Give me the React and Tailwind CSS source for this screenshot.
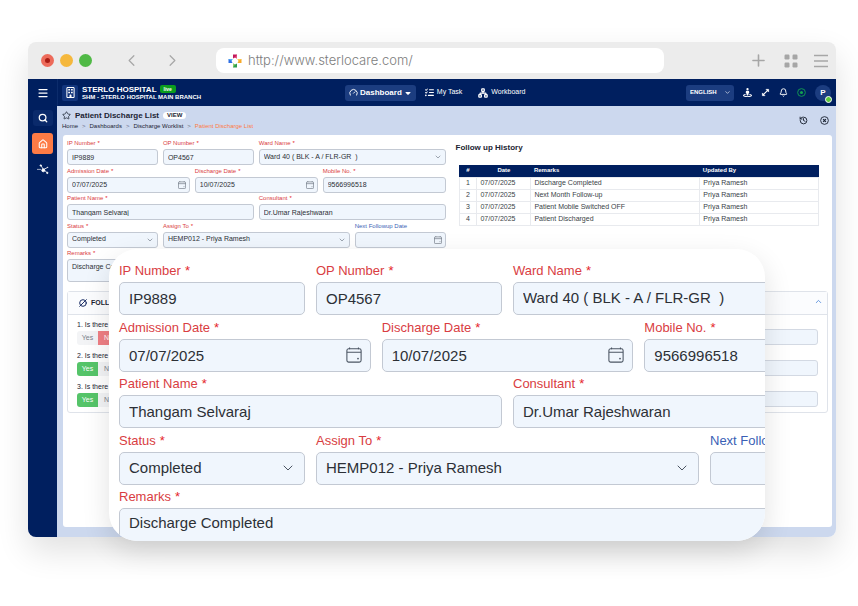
import { useId } from 'react';
import { Bell, ChevronDown, ChevronLeft, ChevronRight, ChevronUp, CircleSlash2, Gauge, History, House, Menu, Network, Plus, Search, Star } from 'lucide-react';
import { FaCaretDown, FaListCheck, FaRegBuilding, FaStreetView } from 'react-icons/fa6';

const FIELDS = [
  { label: 'IP Number', value: 'IP9889', span: 'col-span-3' },
  { label: 'OP Number', value: 'OP4567', span: 'col-span-3' },
  { label: 'Ward Name', value: 'Ward 40 ( BLK - A / FLR-GR\u00a0 )', span: 'col-span-6', type: 'select' },
  { label: 'Admission Date', value: '07/07/2025', span: 'col-span-4', type: 'date' },
  { label: 'Discharge Date', value: '10/07/2025', span: 'col-span-4', type: 'date' },
  { label: 'Mobile No.', value: '9566996518', span: 'col-span-4' },
  { label: 'Patient Name', value: 'Thangam Selvaraj', span: 'col-span-6' },
  { label: 'Consultant', value: 'Dr.Umar Rajeshwaran', span: 'col-span-6' },
  { label: 'Status', value: 'Completed', span: 'col-span-3', type: 'select' },
  { label: 'Assign To', value: 'HEMP012 - Priya Ramesh', span: 'col-span-6', type: 'select' },
  { label: 'Next Followup Date', value: '', span: 'col-span-3', type: 'date', optional: true },
];

const HISTORY = [
  ['07/07/2025', 'Discharge Completed', 'Priya Ramesh'],
  ['07/07/2025', 'Next Month Follow-up', 'Priya Ramesh'],
  ['07/07/2025', 'Patient Mobile Switched OFF', 'Priya Ramesh'],
  ['07/07/2025', 'Patient Discharged', 'Priya Ramesh'],
];

const QUESTIONS = [
  { text: '1. Is there', answer: 'No' },
  { text: '2. Is there', answer: 'Yes' },
  { text: '3. Is there', answer: 'Yes' },
];

const SIZES = {
  sm: {
    grid: 'h-[110px] gap-x-[5px]',
    label: 'h-[11px] text-[6px] leading-[11px]',
    star: 'ml-[2px]',
    control: 'h-4 rounded-[3px] px-1 text-[7px]',
    area: 'h-[23px] rounded-[3px] px-1 py-[3px] text-[7px] leading-[8px]',
    icon: 'right-1 size-2',
    calendar: 'right-1 size-2',
  },
  lg: {
    grid: 'h-[226px] gap-x-[11px]',
    label: 'h-[19px] text-[13px] leading-4',
    star: 'ml-1',
    control: 'h-[33px] rounded-[5px] px-[9px] text-[15px]',
    area: 'h-[60px] rounded-[5px] px-[9px] py-[5px] text-[15px] leading-[18px]',
    icon: 'right-[9px] size-4',
    calendar: 'right-[9px] size-4',
  },
};

function CalendarIcon({ className }) {
  return (
    <svg viewBox="0 0 18 18" fill="none" stroke="currentColor" strokeWidth="1.2" className={className}>
      <rect x="1" y="2" width="16" height="15" rx="2" />
      <path d="M1 6h16M4 0.500v2M14 0.500v2" />
      <circle cx="13.500" cy="13" r="1" fill="currentColor" stroke="none" />
    </svg>
  );
}

function DotIcon({ className }) {
  return (
    <svg viewBox="0 0 10 10" fill="none" stroke="currentColor" className={className}>
      <circle cx="5" cy="5" r="4.300" />
      <circle cx="5" cy="5" r="1.700" fill="currentColor" stroke="none" />
    </svg>
  );
}

function CloseIcon({ className }) {
  return (
    <svg viewBox="0 0 10 10" fill="none" stroke="currentColor" className={className}>
      <circle cx="5" cy="5" r="4.300" />
      <path d="M3.500 3.500l3 3M6.500 3.500l-3 3" strokeWidth="1.400" />
    </svg>
  );
}

function Label({ id, size, optional, children }) {
  return (
    <label htmlFor={id} className={`block whitespace-nowrap ${SIZES[size].label} ${optional ? 'text-[#3a5fb5]' : 'text-[#d93d42]'}`}>
      {children}
      {!optional && <span className={`text-[#e5252a] ${SIZES[size].star}`}>*</span>}
    </label>
  );
}

function Field({ label, value, span, type, optional, size }) {
  const id = useId();
  const s = SIZES[size];
  const control = `block w-full appearance-none border border-[#c3c9d3] bg-[#f0f6fd] text-[#2c3036] outline-none ${s.control}`;
  return (
    <div className={`min-w-0 ${span}`}>
      <Label id={id} size={size} optional={optional}>{label}</Label>
      <div className="relative text-[#4b5563]">
        {type === 'select' ? (
          <select id={id} className={control}>
            <option>{value}</option>
          </select>
        ) : (
          <input id={id} type="text" defaultValue={value} className={control} />
        )}
        {type === 'select' && <ChevronDown strokeWidth={1.5} className={`pointer-events-none absolute inset-y-0 my-auto ${s.icon}`} />}
        {type === 'date' && <CalendarIcon className={`pointer-events-none absolute inset-y-0 my-auto ${s.calendar}`} />}
      </div>
    </div>
  );
}

function DischargeForm({ size }) {
  const id = useId();
  const s = SIZES[size];
  return (
    <form>
      <div className={`grid auto-rows-fr grid-cols-12 ${s.grid}`}>
        {FIELDS.map((f) => <Field key={f.label} size={size} {...f} />)}
      </div>
      <Label id={id} size={size}>Remarks</Label>
      <textarea
        id={id}
        defaultValue="Discharge Completed"
        className={`block w-full resize-none overflow-hidden border border-[#c3c9d3] bg-[#f0f6fd] text-[#2c3036] outline-none ${s.area}`}
      />
    </form>
  );
}

function BrowserBar() {
  return (
    <div className="flex h-[37px] items-center rounded-t-lg bg-[#ececec] pr-2 pl-[13px] text-[#a6a6a6]">
      <div className="flex gap-[6px]">
        <span className="flex size-[13px] items-center justify-center rounded-full bg-[#ed6b5b]">
          <span className="size-[5px] rounded-full bg-[#a81c14]" />
        </span>
        <span className="size-[13px] rounded-full bg-[#f5b83d]" />
        <span className="size-[13px] rounded-full bg-[#50b946]" />
      </div>
      <div className="ml-[30px] flex gap-[22px]">
        <button aria-label="Back"><ChevronLeft size={19} strokeWidth={1.5} /></button>
        <button aria-label="Forward"><ChevronRight size={19} strokeWidth={1.5} /></button>
      </div>
      <div className="ml-[34px] flex h-[25px] flex-1 items-center gap-[6px] rounded-lg bg-white pl-3">
        <svg viewBox="0 0 14 14" className="size-[14px] shrink-0">
          <path d="M5 0.500h4v4L7 3.500 5 4.500z" fill="#c2185b" />
          <path d="M9 0.500v4L7 3.500z" fill="#e8547c" />
          <path d="M13.500 5v4h-4l1-2-1-2z" fill="#f7a928" />
          <path d="M9.500 5h4l-3 2z" fill="#f9cf58" />
          <path d="M9 13.500H5v-4l2 1 2-1z" fill="#2f9e4f" />
          <path d="M5 13.500v-4l2 1z" fill="#8fcf6a" />
          <path d="M0.500 9V5h4l-1 2 1 2z" fill="#2f6fe4" />
          <path d="M0.500 5h4l-1 2z" fill="#57b6f2" />
        </svg>
        <input aria-label="Address" defaultValue="http://www.sterlocare.com/" className="w-full bg-transparent font-[Inter,sans-serif] text-[13px] font-light text-[#7d7d7d] outline-none" />
      </div>
      <div className="ml-[85px] flex items-center gap-4">
        <button aria-label="New tab"><Plus size={19} strokeWidth={2} /></button>
        <button aria-label="Tabs">
          <svg viewBox="0 0 14 14" fill="currentColor" className="size-[14px]">
            <rect x="0.500" y="0.500" width="5" height="5" rx="1.200" />
            <rect x="8.500" y="0.500" width="5" height="5" rx="1.200" />
            <rect x="0.500" y="8.500" width="5" height="5" rx="1.200" />
            <rect x="8.500" y="8.500" width="5" height="5" rx="1.200" />
          </svg>
        </button>
        <button aria-label="Browser menu">
          <svg viewBox="0 0 14 14" stroke="currentColor" strokeWidth="1.700" className="size-[14px]">
            <path d="M0 1.500h14M0 7h14M0 12.500h14" />
          </svg>
        </button>
      </div>
    </div>
  );
}

function SideBar() {
  return (
    <nav className="flex w-[29px] shrink-0 flex-col items-center rounded-bl-lg bg-[#001f5f] text-white">
      <button aria-label="Menu" className="flex h-[27px] items-center"><Menu size={12} strokeWidth={2.5} /></button>
      <button aria-label="Search" className="mt-1 flex h-4 w-5 items-center justify-center rounded-[3px] bg-[#0a2a6b]"><Search size={10} strokeWidth={3} /></button>
      <button aria-label="Home" className="mt-[7px] flex size-[21px] items-center justify-center rounded-[3px] bg-[#fd7b45]"><House size={10} strokeWidth={2.5} /></button>
      <button aria-label="Network" className="mt-[9px]">
        <svg viewBox="0 0 12 12" fill="currentColor" stroke="currentColor" strokeWidth="0.800" className="size-3">
          <path d="M4 2.500L6 6l4.500 4M6.500 6.500L10.500 4.500" fill="none" />
          <circle cx="3.800" cy="2.500" r="0.700" />
          <circle cx="1" cy="6.300" r="0.300" />
          <circle cx="3" cy="6.300" r="0.300" />
          <circle cx="10.700" cy="4.300" r="0.300" />
          <circle cx="10.300" cy="9.900" r="0.700" />
          <circle cx="6.300" cy="7.300" r="1.500" />
        </svg>
      </button>
    </nav>
  );
}

function TopBar() {
  return (
    <header className="flex h-[27px] items-center border-l border-[#0c2c6c] bg-[#001f5f] pr-[5px] pl-1 text-white">
      <span className="flex size-4 items-center justify-center rounded-[2px] bg-[#12357c]"><FaRegBuilding size={11} /></span>
      <div className="ml-1 w-[263px] font-bold whitespace-nowrap">
        <div className="flex items-center gap-[3px] text-[8px] leading-[9px]">
          STERLO HOSPITAL
          <span className="rounded-[2px] bg-[#0b9e1e] px-1 text-[5px] leading-[8px]">live</span>
        </div>
        <div className="text-[6px] leading-[7px]">SHM - STERLO HOSPITAL MAIN BRANCH</div>
      </div>
      <button className="flex h-4 items-center gap-[2px] rounded-[3px] bg-[#1c3d80] px-1 text-[8px] font-bold">
        <Gauge size={9} strokeWidth={2.5} />
        Dashboard
        <FaCaretDown size={8} />
      </button>
      <a href="#task" className="ml-[9px] flex items-center gap-[3px] text-[7px] font-medium whitespace-nowrap"><FaListCheck size={9} />My Task</a>
      <a href="#board" className="ml-4 flex items-center gap-[3px] text-[7px] font-medium"><Network size={10} strokeWidth={3} />Workboard</a>
      <div className="ml-auto flex items-center gap-[9px]">
        <div className="relative">
          <select aria-label="Language" className="block h-4 w-12 appearance-none rounded-[3px] bg-[#1c3d80] pl-1 text-[6px] font-bold outline-none">
            <option>ENGLISH</option>
          </select>
          <ChevronDown size={7} className="pointer-events-none absolute inset-y-0 right-[3px] my-auto" />
        </div>
        <button aria-label="Location"><FaStreetView size={9} /></button>
        <button aria-label="Expand">
          <svg viewBox="0 0 10 10" fill="currentColor" stroke="currentColor" strokeWidth="1.200" className="size-[9px]">
            <path d="M2 8l6-6" />
            <path d="M5.500 1.500h3v3zM1.500 5.500v3h3z" strokeLinejoin="round" strokeWidth="0.600" />
          </svg>
        </button>
        <button aria-label="Notifications"><Bell size={9} strokeWidth={2.5} /></button>
        <button aria-label="Online" className="text-[#12a150]"><DotIcon className="size-[9px]" /></button>
        <button aria-label="Profile" className="relative flex size-4 items-center justify-center rounded-full bg-[#1c3d80] text-[8px] font-bold">
          P
          <span className="absolute -right-px -bottom-[2px] size-[7px] rounded-full border border-white bg-[#5ac83a]" />
        </button>
      </div>
    </header>
  );
}

function PageTitle() {
  return (
    <div className="flex h-[29px] items-center justify-between pr-[7px] pl-[5px] text-[#1c2433]">
      <div>
        <div className="flex items-center gap-1">
          <Star size={9} strokeWidth={2} />
          <h1 className="text-[8px] leading-[10px] font-bold">Patient Discharge List</h1>
          <span className="rounded-full bg-white px-1 text-[6px] leading-[7px] font-bold">VIEW</span>
        </div>
        <div className="flex gap-1 text-[6px] leading-[10px]">
          <a href="#home">Home</a>
          <span className="text-[#68738a]">&gt;</span>
          <a href="#dashboards">Dashboards</a>
          <span className="text-[#68738a]">&gt;</span>
          <a href="#worklist">Discharge Worklist</a>
          <span className="text-[#68738a]">&gt;</span>
          <span className="text-[#fd7b45]">Patient Discharge List</span>
        </div>
      </div>
      <div className="flex gap-3">
        <button aria-label="History"><History size={9} strokeWidth={2.5} /></button>
        <button aria-label="Close"><CloseIcon className="size-[9px]" /></button>
      </div>
    </div>
  );
}

function FollowUpHistory() {
  return (
    <section>
      <h2 className="px-[6px] pt-[5px] text-[8px] leading-[10px] font-bold text-[#1c2433]">Follow up History</h2>
      <div className="px-[9px] pt-3">
        <table className="w-full table-fixed border-collapse text-[7px] text-[#3a3f47]">
          <thead>
            <tr className="h-3 bg-[#001f5f] text-[6px] leading-[11px] text-white">
              <th className="w-[5%]">#</th>
              <th className="w-[15%]">Date</th>
              <th className="w-[47%] px-[3px] text-left">Remarks</th>
              <th className="px-[3px] text-left">Updated By</th>
            </tr>
          </thead>
          <tbody>
            {HISTORY.map(([date, remarks, by], i) => (
              <tr key={remarks} className="h-3 leading-[10px]">
                <td className="border border-[#e8eaee] text-center">{i + 1}</td>
                <td className="border border-[#e8eaee] px-[3px]">{date}</td>
                <td className="border border-[#e8eaee] px-[3px]">{remarks}</td>
                <td className="border border-[#e8eaee] px-[3px]">{by}</td>
              </tr>
            ))}
          </tbody>
        </table>
      </div>
    </section>
  );
}

function Questionnaire() {
  return (
    <section className="mt-[9px] rounded-[3px] border border-[#dfe3ea]">
      <header className="flex h-[23px] items-center border-b border-[#dfe3ea] bg-[#fbfcfe] pr-1 pl-[11px] text-[#1c2f66]">
        <CircleSlash2 size={8} strokeWidth={3} />
        <h2 className="ml-1 text-[7px] font-bold text-[#1c2433]">FOLL</h2>
        <button aria-label="Collapse" className="mb-1 ml-auto text-[#3a7bd5]"><ChevronUp size={9} /></button>
      </header>
      <div className="flex flex-col gap-[6px] px-[9px] py-[5px]">
        {QUESTIONS.map((q) => (
          <div key={q.text} className="grid grid-cols-2 items-end">
            <div>
              <p className="text-[7px] leading-[9px] text-[#1c2433]">{q.text}</p>
              <div className="mt-[2px] flex h-[14px] w-[42px] overflow-hidden rounded-[3px] bg-[#f3f4f6] text-[7px] text-[#7b818a]">
                <button className={`flex-1 ${q.answer === 'Yes' ? 'bg-[#55c469] text-white' : ''}`}>Yes</button>
                <button className={`flex-1 ${q.answer === 'No' ? 'bg-[#f07f84] text-white' : ''}`}>No</button>
              </div>
            </div>
            <input aria-label={q.text} className="h-4 rounded-[3px] border border-[#d3d9e3] bg-[#f0f6fd] outline-none" />
          </div>
        ))}
      </div>
    </section>
  );
}

export default function App() {
  return (
    <main className="min-h-screen bg-white pt-[42px] pr-[22px] pb-[69px] pl-7 font-['Liberation_Sans',Arial,sans-serif]">
      <div className="relative w-full rounded-lg shadow-[0_14px_32px_rgba(0,0,0,0.12)]">
        <BrowserBar />
        <div className="flex rounded-b-lg bg-[#ccd8ee]">
          <SideBar />
          <div className="min-w-0 flex-1">
            <TopBar />
            <PageTitle />
            <div className="mr-1 mb-[10px] ml-[6px] min-h-[392px] rounded-[3px] bg-white px-1 pt-[3px]">
              <div className="grid grid-cols-2 gap-1">
                <DischargeForm size="sm" />
                <FollowUpHistory />
              </div>
              <Questionnaire />
            </div>
          </div>
        </div>

        {/* Magnified form */}
        <div className="absolute top-[207px] right-[71px] -bottom-1 left-[81px] overflow-hidden rounded-[28px] bg-white pt-[14px] pl-[10px] shadow-[0_10px_28px_rgba(0,0,0,0.12)]">
          <div className="min-w-[777px]">
            <DischargeForm size="lg" />
          </div>
        </div>
      </div>
    </main>
  );
}
